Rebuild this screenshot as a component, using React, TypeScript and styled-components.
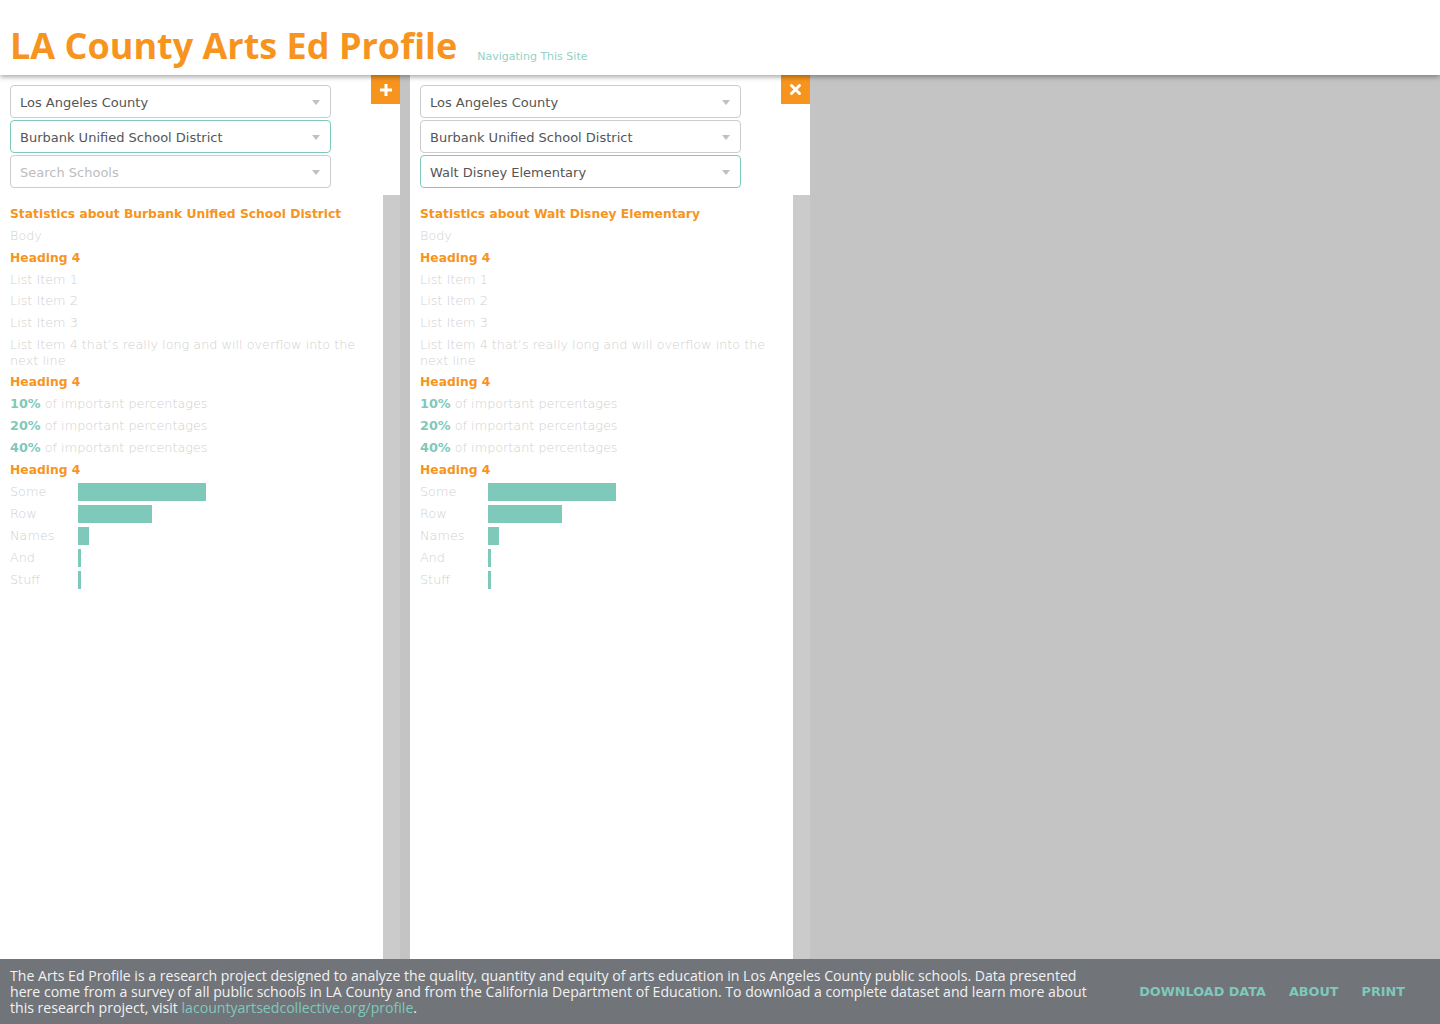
import React from 'react';
import styled, { createGlobalStyle } from 'styled-components';

const ORANGE = '#f7941d';
const TEAL = '#7fc9bb';

const GlobalStyle = createGlobalStyle`
  html, body, #root {
    margin: 0;
    height: 100%;
  }
  body {
    font-family: 'DejaVu Sans', 'Liberation Sans', sans-serif;
    background: #c4c4c4;
  }
  * { box-sizing: border-box; }
`;

const Page = styled.div`
  display: flex;
  flex-direction: column;
  height: 100vh;
  overflow: hidden;
`;

const Header = styled.header`
  height: 75px;
  background: #fff;
  display: flex;
  align-items: flex-end;
  padding: 0 10px 7px;
  gap: 20px;
  position: relative;
  z-index: 2;
  box-shadow: 0 2px 5px rgba(0, 0, 0, 0.35);
`;

const Title = styled.h1`
  margin: 0;
  font-family: 'Open Sans', 'DejaVu Sans', sans-serif;
  font-size: 36px;
  line-height: 44px;
  font-weight: 700;
  color: ${ORANGE};
`;

const NavLink = styled.a`
  font-size: 11px;
  color: #93d2c6;
  text-decoration: none;
  margin-bottom: 5px;
`;

const Main = styled.main`
  flex: 1;
  display: flex;
  gap: 10px;
  background: #c4c4c4;
  min-height: 0;
`;

const Panel = styled.section`
  width: 400px;
  display: flex;
  flex-direction: column;
`;

const Controls = styled.div`
  position: relative;
  background: #fff;
  padding: 10px 10px 7px;
  display: flex;
  flex-direction: column;
  gap: 2px;
`;

const CornerButton = styled.button`
  position: absolute;
  top: 0;
  right: 0;
  width: 29px;
  height: 29px;
  border: 0;
  padding: 0;
  background: ${ORANGE};
  display: flex;
  align-items: center;
  justify-content: center;
  cursor: pointer;
`;

const Select = styled.div<{ $active?: boolean; $placeholder?: boolean }>`
  width: 321px;
  height: 33px;
  border: 1px solid ${(p) => (p.$active ? TEAL : '#cccccc')};
  border-radius: 4px;
  display: flex;
  align-items: center;
  justify-content: space-between;
  padding: 2px 10px 0 9px;
  font-size: 13px;
  color: ${(p) => (p.$placeholder ? '#bdbdbd' : '#555')};
`;

const Caret = styled.span`
  width: 0;
  height: 0;
  border-left: 4.5px solid transparent;
  border-right: 4.5px solid transparent;
  border-top: 5px solid #c0c0c0;
`;

const BodyRow = styled.div`
  flex: 1;
  display: flex;
  min-height: 0;
`;

const Content = styled.div`
  flex: 1;
  background: #fff;
  padding: 11px 10px;
`;

const Track = styled.div`
  width: 17px;
  background: #cbcbcb;
`;

const Heading = styled.h4`
  margin: 0 0 6px;
  font-size: 12.3px;
  line-height: 16px;
  font-weight: 700;
  color: ${ORANGE};
`;

const Text = styled.p`
  margin: 0 0 5.7px;
  font-size: 12.8px;
  line-height: 16px;
  font-weight: 300;
  color: #d0d0d0;
`;

const Pct = styled.strong`
  color: ${TEAL};
  font-weight: 700;
`;

const Bars = styled.div`
  margin-top: -1px;
`;

const BarRow = styled.div`
  display: flex;
  align-items: center;
  height: 18px;
  margin-bottom: 4px;
`;

const BarLabel = styled.span`
  width: 68px;
  font-size: 12.8px;
  font-weight: 300;
  color: #d0d0d0;
`;

const Bar = styled.div`
  height: 18px;
  background: ${TEAL};
`;

const Footer = styled.footer`
  height: 65px;
  background: #717479;
  display: flex;
  align-items: center;
  padding: 0 35px 0 10px;
  color: #f2f2f2;
`;

const FooterText = styled.p`
  margin: 0;
  width: 1084px;
  font-family: 'Open Sans', sans-serif;
  font-size: 14.1px;
  line-height: 16px;
  a {
    color: ${TEAL};
    text-decoration: none;
  }
`;

const FooterLinks = styled.nav`
  margin-left: auto;
  display: flex;
  gap: 23px;
`;

const FooterLink = styled.a`
  font-size: 12.8px;
  font-weight: 700;
  color: ${TEAL};
  text-decoration: none;
`;

const PlusIcon = () => (
  <svg width="14" height="14" viewBox="0 0 14 14">
    <path d="M5.5 1h3v4.5H13v3H8.5V13h-3V8.5H1v-3h4.5z" fill="#fff" />
  </svg>
);

const CloseIcon = () => (
  <svg width="13" height="13" viewBox="0 0 13 13">
    <path d="M2.5 2.5l8 8M10.5 2.5l-8 8" stroke="#fff" strokeWidth="3" strokeLinecap="round" />
  </svg>
);

const bars = [
  { name: 'Some', w: 128 },
  { name: 'Row', w: 74 },
  { name: 'Names', w: 11 },
  { name: 'And', w: 3 },
  { name: 'Stuff', w: 3 },
];

interface PanelProps {
  subject: string;
  school?: string;
  districtActive?: boolean;
  kind: 'add' | 'close';
}

const ProfilePanel = ({ subject, school, districtActive, kind }: PanelProps) => (
  <Panel>
    <Controls>
      <CornerButton aria-label={kind}>{kind === 'add' ? <PlusIcon /> : <CloseIcon />}</CornerButton>
      <Select>
        Los Angeles County <Caret />
      </Select>
      <Select $active={districtActive}>
        Burbank Unified School District <Caret />
      </Select>
      <Select $active={!!school} $placeholder={!school}>
        {school || 'Search Schools'} <Caret />
      </Select>
    </Controls>
    <BodyRow>
      <Content>
        <Heading>Statistics about {subject}</Heading>
        <Text>Body</Text>
        <Heading>Heading 4</Heading>
        <Text>List Item 1</Text>
        <Text>List Item 2</Text>
        <Text>List Item 3</Text>
        <Text>List Item 4 that’s really long and will overflow into the next line</Text>
        <Heading>Heading 4</Heading>
        <Text>
          <Pct>10%</Pct> of important percentages
        </Text>
        <Text>
          <Pct>20%</Pct> of important percentages
        </Text>
        <Text>
          <Pct>40%</Pct> of important percentages
        </Text>
        <Heading>Heading 4</Heading>
        <Bars>
          {bars.map((b) => (
            <BarRow key={b.name}>
              <BarLabel>{b.name}</BarLabel>
              <Bar style={{ width: b.w }} />
            </BarRow>
          ))}
        </Bars>
      </Content>
      <Track />
    </BodyRow>
  </Panel>
);

export default function App() {
  return (
    <Page>
      <GlobalStyle />
      <Header>
        <Title>LA County Arts Ed Profile</Title>
        <NavLink href="#">Navigating This Site</NavLink>
      </Header>
      <Main>
        <ProfilePanel subject="Burbank Unified School District" districtActive kind="add" />
        <ProfilePanel subject="Walt Disney Elementary" school="Walt Disney Elementary" kind="close" />
      </Main>
      <Footer>
        <FooterText>
          The Arts Ed Profile is a research project designed to analyze the quality, quantity and equity of arts
          education in Los Angeles County public schools. Data presented here come from a survey of all public schools in
          LA County and from the California Department of Education. To download a complete dataset and learn more about
          this research project, visit <a href="#">lacountyartsedcollective.org/profile</a>.
        </FooterText>
        <FooterLinks>
          <FooterLink href="#">DOWNLOAD DATA</FooterLink>
          <FooterLink href="#">ABOUT</FooterLink>
          <FooterLink href="#">PRINT</FooterLink>
        </FooterLinks>
      </Footer>
    </Page>
  );
}
